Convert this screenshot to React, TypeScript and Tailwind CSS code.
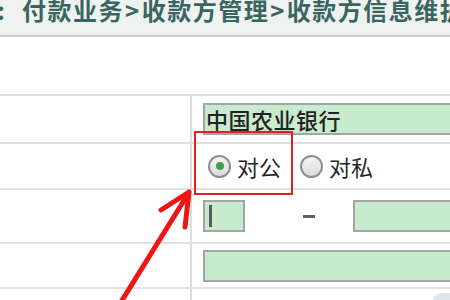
import React from "react"

const cjk = { fontFamily: '"Noto Sans CJK SC", "Noto Sans", sans-serif' }

function Radio({ checked, label }: { checked?: boolean; label: string }) {
  return (
    <label className="flex items-center gap-[6px]">
      <span className="flex h-[23px] w-[23px] items-center justify-center rounded-full border-2 border-[#8c908e] bg-gradient-to-b from-[#f4f4f4] to-[#dcdcdc]">
        {checked && <span className="h-[8px] w-[8px] rounded-full bg-[#3e9e4c]" />}
      </span>
      <span className="text-[22px] leading-none text-[#262626]">{label}</span>
    </label>
  )
}

function Field({ width, children }: { width?: string; children?: React.ReactNode }) {
  return (
    <div
      className={`flex h-[32px] items-center border-2 border-[#a2a7a4] bg-[#c9ebcd] pl-[2px] ${width ?? "flex-1"}`}
    >
      {children}
    </div>
  )
}

function Row({ height, children }: { height: string; children?: React.ReactNode }) {
  return (
    <div className={`flex border-b-2 border-[#e0e0e0] ${height}`}>
      <div className="w-[192px] shrink-0 border-r-2 border-[#dcdcdc]" />
      <div className="flex flex-1 items-center pl-[11px]">{children}</div>
    </div>
  )
}

export default function App() {
  return (
    <div className="relative h-[300px] w-[450px] overflow-hidden bg-white" style={cjk}>
      {/* breadcrumb bar */}
      <div className="h-[37px] overflow-hidden border-b-2 border-[#c9cdcb] bg-[#eef2f0]">
        <div className="-mt-[2px] flex items-center whitespace-nowrap text-[24px] font-bold leading-[24px] tracking-[1.5px] text-[#3b6561]">
          <span className="-ml-[3px] w-[25px] shrink-0">:</span>
          <span className="shrink-0">付款业务</span>
          <span className="shrink-0 px-[1px]">&gt;</span>
          <span className="shrink-0">收款方管理</span>
          <span className="shrink-0 px-[1px]">&gt;</span>
          <span className="shrink-0">收款方信息维护</span>
        </div>
      </div>

      <div className="h-[57px]" />

      {/* form table */}
      <div className="border-t-2 border-[#e0e0e0]">
        <Row height="h-[48px]">
          <div className="-mr-[40px] flex flex-1">
            <div className="flex h-[32px] flex-1 items-center border-2 border-[#a2a7a4] bg-[#c9ebcd] pl-[1px]">
              <span className="text-[22px] font-medium leading-none tracking-[0.5px] text-[#222]">中国农业银行</span>
            </div>
          </div>
        </Row>
        <Row height="h-[46px]">
          <div className="flex items-center gap-[19px] pl-[5px]">
            <Radio checked label="对公" />
            <Radio label="对私" />
          </div>
        </Row>
        <Row height="h-[54px]">
          <div className="-mr-[40px] flex flex-1 items-center">
            <Field width="w-[42px]">
              <span className="ml-[2px] h-[22px] w-[3px] bg-[#555b57]" />
            </Field>
            <span className="ml-[58px] mr-[38px] h-[3px] w-[12px] bg-[#5e625f]" />
            <Field />
          </div>
        </Row>
        <Row height="h-[45px]">
          <div className="-mr-[40px] flex flex-1">
            <Field />
          </div>
        </Row>
        <div className="flex h-[20px]">
          <div className="w-[192px] shrink-0 border-r-2 border-[#dcdcdc]" />
          <div className="flex flex-1 justify-end pt-[4px]">
            <div className="h-[16px] w-[18px] rounded-tl-[10px] bg-[#dde6ee]" />
          </div>
        </div>
      </div>

      {/* annotation: red highlight box */}
      <div className="absolute left-[194px] top-[131px] h-[64px] w-[99px] border-2 border-[#e22020]" />

      {/* annotation: red arrow */}
      <svg className="pointer-events-none absolute left-0 top-0" width="450" height="300" viewBox="0 0 450 300">
        <g stroke="#f01414" strokeWidth="5" strokeLinecap="round" strokeLinejoin="round" fill="none">
          <path d="M121 302 L188 194" />
          <path d="M161 210 L189 192 L185 227" />
        </g>
      </svg>
    </div>
  )
}
